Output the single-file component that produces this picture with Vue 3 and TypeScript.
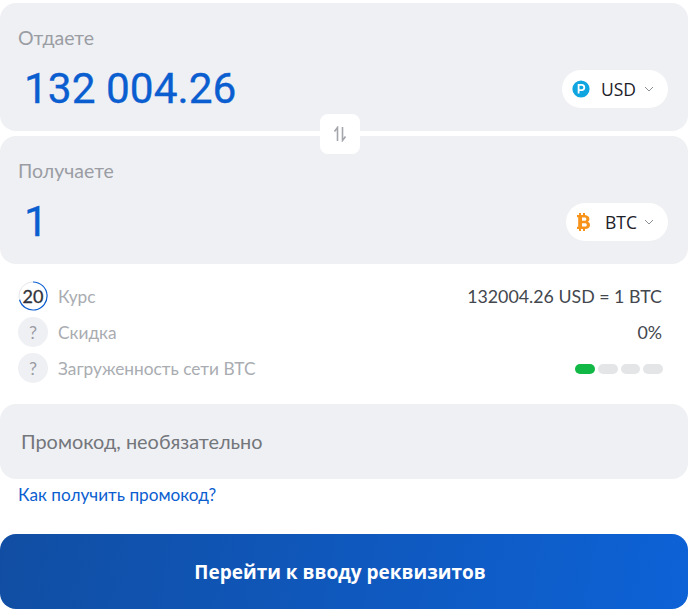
<script setup lang="ts">
interface Row { label: string; value?: string; kind: 'timer' | 'help' }
const rows: Row[] = [
  { label: 'Курс', value: '132004.26 USD = 1 BTC', kind: 'timer' },
  { label: 'Скидка', value: '0%', kind: 'help' },
  { label: 'Загруженность сети BTC', kind: 'help' },
]
const load = [true, false, false, false]
</script>

<template>
  <main class="page">
    <section class="exchange">
      <div class="card">
        <div class="label">Отдаете</div>
        <div class="line">
          <div class="amount">132 004.26</div>
          <button class="pick usd">
            <svg width="18" height="18" viewBox="0 0 18 18">
              <circle cx="9" cy="9" r="8.6" fill="#0ea5e0" />
              <path d="M6.6 13.4V4.9h3.1a2.6 2.6 0 0 1 0 5.2H6.6" fill="none" stroke="#fff" stroke-width="1.8" />
            </svg>
            <span class="code">USD</span>
            <svg class="chev" width="10" height="6" viewBox="0 0 10 6"><path d="M1 1l4 4 4-4" fill="none" stroke="#8b8f96" stroke-width="1" /></svg>
          </button>
        </div>
      </div>
      <div class="card second">
        <div class="label">Получаете</div>
        <div class="line">
          <div class="amount">1</div>
          <button class="pick btc">
            <svg width="14" height="18" viewBox="0 0 14 18">
              <path fill="#f7931a" fill-rule="evenodd" d="M0 2h2V0h2v2h2V0h2v2.1c2.6.3 4.4 1.6 4.4 3.9 0 1.3-.6 2.3-1.6 2.8 1.4.5 2.2 1.6 2.2 3.1 0 2.5-2 3.900-5 4.100V18H6v-2H4v2H2v-2H0v-2.200h1.200V4.200H0zM5 4.600v3.200h2.600c1 0 1.700-.6 1.700-1.600S8.600 4.600 7.600 4.600zM5 10.200v3.400h3c1.100 0 1.800-.7 1.800-1.700s-.7-1.700-1.800-1.700z" />
            </svg>
            <span class="code">BTC</span>
            <svg class="chev" width="10" height="6" viewBox="0 0 10 6"><path d="M1 1l4 4 4-4" fill="none" stroke="#8b8f96" stroke-width="1" /></svg>
          </button>
        </div>
      </div>
      <button class="swap" aria-label="swap">
        <svg width="14" height="16" viewBox="0 0 14 16">
          <path d="M4.500 15V1.500L1.500 5.500M9.500 1v13.500l3-4" fill="none" stroke="#a3a6ab" stroke-width="1.600" />
        </svg>
      </button>
    </section>

    <section class="info">
      <div v-for="row in rows" :key="row.label" class="row">
        <div class="row-left">
          <span v-if="row.kind === 'timer'" class="timer">
            <svg width="30" height="30" viewBox="0 0 30 30">
              <path d="M15 1A14 14 0 1 1 1.500 18.500" fill="none" stroke="#0b5ed0" stroke-width="1.200" />
              <path d="M1.500 18.500A14 14 0 0 1 15 1" fill="none" stroke="#e4e6ea" stroke-width="1" />
            </svg>
            <span class="num">20</span>
          </span>
          <span v-else class="help">?</span>
          <span class="row-label">{{ row.label }}</span>
        </div>
        <span v-if="row.value" class="row-value">{{ row.value }}</span>
        <span v-else class="bars">
          <i v-for="(on, i) in load" :key="i" :class="{ on }"></i>
        </span>
      </div>
    </section>

    <div class="promo">Промокод, необязательно</div>
    <a class="link">Как получить промокод?</a>
    <button class="submit">Перейти к вводу реквизитов</button>
  </main>
</template>

<style>
body { background: #fff; }
</style>

<style scoped>
.page {
  width: 688px;
  padding-top: 3px;
  font-family: "Lato", "Noto Sans", sans-serif;
}
.exchange { position: relative; display: flex; flex-direction: column; gap: 5px; }
.card {
  height: 128px;
  box-sizing: border-box;
  background: #eff0f4;
  border-radius: 16px;
  padding: 23px 20px 0 18px;
}
.label { font-size: 19.5px; line-height: 23px; color: #9a9da3; }
.line { display: flex; align-items: center; justify-content: space-between; margin-top: 15px; }
.amount {
  font-family: "Roboto", sans-serif;
  font-size: 42.400px;
  line-height: 50px;
  color: #0b5ed0;
  -webkit-text-stroke: 0.35px #0b5ed0;
  padding-left: 6px;
}
.pick {
  height: 38px;
  border: 0;
  background: #fff;
  border-radius: 19px;
  display: flex;
  align-items: center;
  padding: 0 14px 0 10px;
  font: inherit;
}
.btc { padding-left: 11px; }
.code { font-family: "Open Sans", sans-serif; font-size: 17.500px; color: #1d2129; margin-left: 11px; margin-right: 8px; }
.btc .code { margin-left: 14px; margin-right: 7px; }
.chev { display: block; }
.swap {
  position: absolute;
  left: 320px;
  top: 111px;
  width: 40px;
  height: 40px;
  border: 0;
  padding: 0;
  background: #fff;
  border-radius: 8px;
  display: flex;
  align-items: center;
  justify-content: center;
}
.info { display: flex; flex-direction: column; gap: 6px; padding: 17px 26px 3px 18px; }
.row { height: 30px; display: flex; align-items: center; justify-content: space-between; }
.row-left { display: flex; align-items: center; gap: 10px; }
.timer { position: relative; width: 30px; height: 30px; display: flex; align-items: center; justify-content: center; }
.timer svg { position: absolute; inset: 0; }
.num { font-size: 18px; color: #30343b; -webkit-text-stroke: 0.3px #30343b; }
.help {
  width: 30px; height: 30px; border-radius: 50%;
  background: #eff0f4; color: #9a9da3;
  display: flex; align-items: center; justify-content: center;
  font-size: 18px;
}
.row-label { font-size: 17.300px; color: #a9acb1; }
.row-value { font-size: 17.800px; color: #43474e; }
.bars { display: flex; gap: 3px; margin: 2px -1px 0 0; }
.bars i { width: 19.750px; height: 10px; border-radius: 5px; background: #e4e5e7; }
.bars i.on { background: #12b846; }
.promo {
  margin-top: 18px;
  height: 75px;
  box-sizing: border-box;
  padding: 0 0 2px 21px;
  background: #eff0f4;
  border-radius: 16px;
  display: flex;
  align-items: center;
  font-size: 19.900px;
  color: #73767b;
}
.link { display: block; margin: 5px 0 0 18px; font-size: 17.200px; line-height: 22px; color: #0b5ed0; }
.submit {
  display: block;
  width: 100%;
  height: 75px;
  margin-top: 28px;
  padding: 0 8px 0 0;
  border: 0;
  border-radius: 16px;
  background: linear-gradient(100deg, #114ea3, #0d62d6);
  color: #fff;
  font: 700 19px "Open Sans", sans-serif;
}
</style>
